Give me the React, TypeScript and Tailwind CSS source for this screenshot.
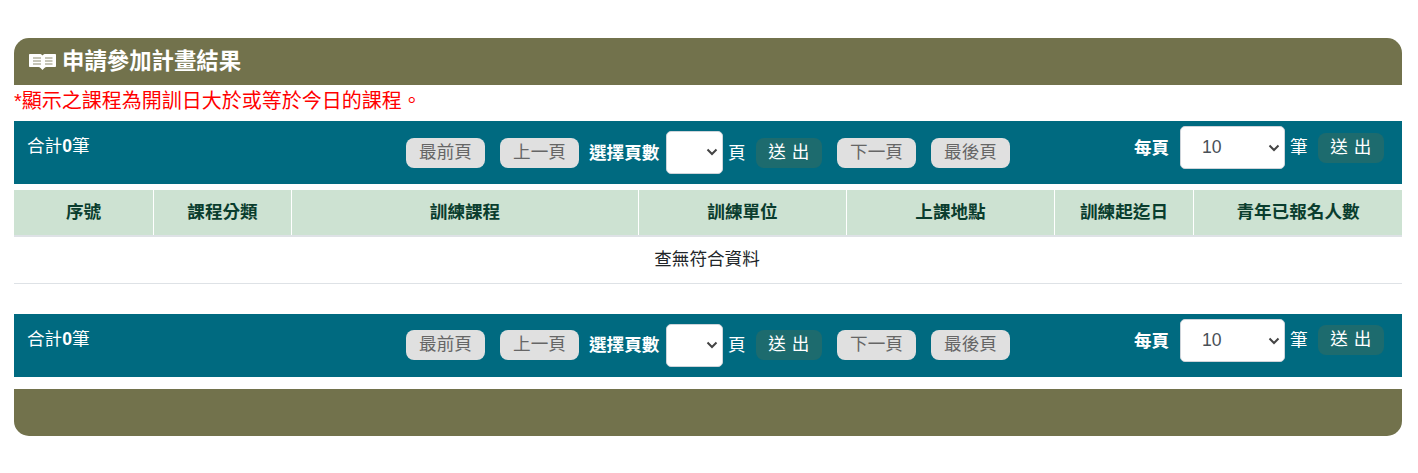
import React from 'react';

const font = "font-['Arial','Liberation_Sans','Noto_Sans_CJK_TC',sans-serif]";

const columns = [
  { label: '序號', width: 'w-[139px]' },
  { label: '課程分類', width: 'w-[138px]' },
  { label: '訓練課程', width: 'w-[347px]' },
  { label: '訓練單位', width: 'w-[208px]' },
  { label: '上課地點', width: 'w-[208px]' },
  { label: '訓練起迄日', width: 'w-[139px]' },
  { label: '青年已報名人數', width: 'flex-1' },
];

const BookIcon = () => (
  <svg width="27" height="18" viewBox="0 0 27 18" className="shrink-0">
    <path
      d="M1 1H10.5C12 1 13 1.6 13.5 2.6C14 1.6 15 1 16.5 1H26C26.6 1 27 1.4 27 2V13C27 13.6 26.6 14 26 14H17.5C16 14 14.8 15.5 13.5 17C12.2 15.5 11 14 9.5 14H1C0.4 14 0 13.6 0 13V2C0 1.4 0.4 1 1 1Z"
      fill="#fff"
    />
    <path d="M4 5H12M4 8H12M4 11H12M16 5H23.5M16 8H23.5M16 11H23.5" stroke="#8d8c70" strokeWidth="1" />
  </svg>
);

const PageButton = ({ label, className = '' }: { label: string; className?: string }) => (
  <button type="button" className={`h-[30px] w-[79px] rounded-lg bg-[#e0e0e0] text-[17.6px] leading-none text-[#666] ${className}`}>
    {label}
  </button>
);

const SubmitButton = ({ className = '' }: { className?: string }) => (
  <button type="button" className={`h-[30px] w-[66px] rounded-lg bg-[#1d6b6e] text-[17.6px] leading-none tracking-[0.5px] text-white ${className}`}>
    送 出
  </button>
);

const Chevron = () => (
  <svg width="12" height="8" viewBox="0 0 12 8" className="pointer-events-none absolute right-[4px] top-1/2 -translate-y-1/2">
    <path d="M1.5 1.5L6 6L10.5 1.5" fill="none" stroke="#444" strokeWidth="2" />
  </svg>
);

const PagerBar = ({ bottom = false }: { bottom?: boolean }) => (
  <div className="flex h-[63px] bg-[#006a80] pl-[13px] pr-[18px] text-[17.6px] text-white">
    <div className="w-[379px] pt-[13px] leading-[24px]">
      合計<b>0</b>筆
    </div>
    <div className={`flex h-full items-center ${bottom ? 'pb-[1px]' : 'pt-[1px]'}`}>
      <PageButton label="最前頁" />
      <PageButton label="上一頁" className="ml-[15px]" />
      <b className="ml-[10px] w-[72px] whitespace-nowrap">選擇頁數</b>
      <div className={`relative ml-[5px] h-[43px] w-[57px] rounded-[5px] border border-[#ced4da] bg-white ${bottom ? '' : 'mb-[2px]'}`}>
        <Chevron />
      </div>
      <span className="ml-[5px] w-[19px]">頁</span>
      <SubmitButton className="ml-[9px]" />
      <PageButton label="下一頁" className="ml-[15px]" />
      <PageButton label="最後頁" className="ml-[15px]" />
    </div>
    <div className="ml-auto flex h-full items-start pt-[5px]">
      <b className="mt-[10px] w-[36px] whitespace-nowrap leading-[24px]">每頁</b>
      <div className="relative ml-[10px] flex h-[43px] w-[105px] items-center rounded-[5px] border border-[#ced4da] bg-white pl-[21px] text-[#495057]">
        10
        <Chevron />
      </div>
      <span className="ml-[5px] mt-[9px] w-[18px] leading-[24px]">筆</span>
      <SubmitButton className={`ml-[10px] ${bottom ? 'mt-[6px]' : 'mt-[7px]'}`} />
    </div>
  </div>
);

export default function App() {
  return (
    <div className={`min-h-[473px] bg-white pb-[37px] pl-[14px] pr-[16px] pt-[38px] ${font}`}>
      <div className="flex h-[47px] items-center gap-[6px] rounded-t-[15px] bg-[#72724c] pl-[15px] text-[22.4px] font-bold text-white">
        <BookIcon />
        <span className="pt-[1px]">申請參加計畫結果</span>
      </div>
      <p className="h-[36px] pt-[4px] text-[20px] leading-[25px] text-[#ff0000]">*顯示之課程為開訓日大於或等於今日的課程。</p>
      <PagerBar />
      <div className="mt-[6px]">
        <div className="flex h-[47px] border-b-2 border-[#dee2e6] bg-[#cde2d2]">
          {columns.map((col, i) => (
            <div
              key={col.label}
              className={`flex h-[45px] items-center justify-center text-[17.6px] font-bold text-[#0a3d2e] ${col.width} ${i > 0 ? 'border-l border-white' : ''}`}
            >
              {col.label}
            </div>
          ))}
        </div>
        <div className="flex h-[47px] items-center justify-center border-b border-[#dee2e6] pb-[2px] pr-[2px] text-[17.6px] text-[#212529]">
          查無符合資料
        </div>
      </div>
      <div className="mt-[30px]">
        <PagerBar bottom />
      </div>
      <div className="mt-[12px] h-[47px] rounded-b-[15px] bg-[#72724c]" />
    </div>
  );
}
